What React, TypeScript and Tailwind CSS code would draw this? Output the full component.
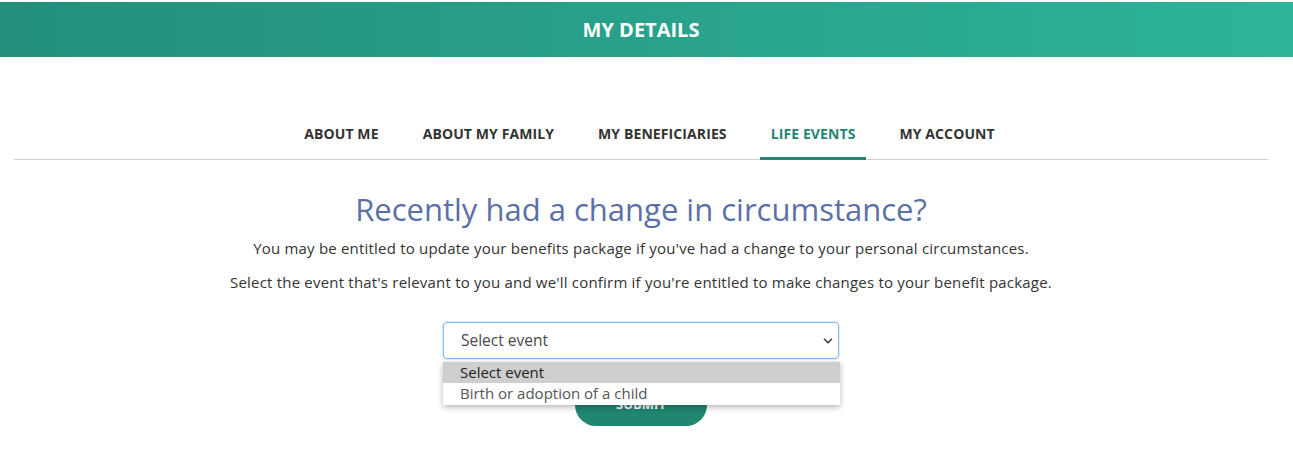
import { ChevronDown } from "lucide-react";

const tabs = ["About me", "About my family", "My beneficiaries", "Life events", "My account"];

function Tabs({ active }: { active: string }) {
  return (
    <nav className="border-b border-[#cfcfcf] pt-[67px]">
      <ul className="flex justify-center gap-[22px] pl-[17px]">
        {tabs.map((t) => {
          const on = t === active;
          return (
            <li
              key={t}
              className={
                on
                  ? "px-[11px] pb-[14px] border-b-[3px] border-[#238775] -mb-px text-[14px] leading-[19px] font-bold uppercase tracking-[0.1px] text-[#238775]"
                  : "px-[11px] pb-[14px] border-b-[3px] border-transparent -mb-px text-[14px] leading-[19px] font-bold uppercase tracking-[0.1px] text-[#333]"
              }
            >
              {t}
            </li>
          );
        })}
      </ul>
    </nav>
  );
}

function EventSelect() {
  return (
    <div className="relative w-[396px] mx-auto text-left">
      <div className="h-[37px] flex items-center justify-between rounded-[4px] border border-[#80bdff] shadow-[0_0_0_1px_rgba(128,189,255,0.25)] bg-white pl-[17px] pr-[3px]">
        <span className="text-[15.5px] text-[#4a4a4a]">Select event</span>
        <ChevronDown size={14} strokeWidth={3} className="text-[#444]" />
      </div>
      <ul className="absolute left-0 right-[-1px] top-[40px] z-10 bg-white shadow-[0_2px_6px_rgba(0,0,0,0.3)] text-[15px] leading-[21px]">
        <li className="bg-[#cecece] pl-[17px] h-[21px] text-[#222]">Select event</li>
        <li className="pl-[17px] h-[22px] text-[#555]">Birth or adoption of a child</li>
      </ul>
    </div>
  );
}

export default function App() {
  return (
    <div className="min-h-[471px] bg-white font-['Open_Sans',sans-serif] text-[#333]">
      <header className="mt-[2px] h-[55px] flex items-center justify-center pr-[11px] bg-gradient-to-r from-[#238f7c] to-[#2eb49b]">
        <h1 className="text-white text-[20px] font-bold">MY DETAILS</h1>
      </header>
      <div className="pl-[14px] pr-[25px]">
        <Tabs active="Life events" />
        <main className="text-center">
          <h2 className="mt-[29px] text-[31px] leading-[40px] text-[#5b70a6]">Recently had a change in circumstance?</h2>
          <p className="mt-[9px] text-[15px] leading-[20px] tracking-[0.2px]">
            You may be entitled to update your benefits package if you've had a change to your personal circumstances.
          </p>
          <p className="mt-[14px] text-[15px] leading-[20px] tracking-[0.2px]">
            Select the event that's relevant to you and we'll confirm if you're entitled to make changes to your benefit package.
          </p>
          <div className="mt-[30px]">
            <EventSelect />
          </div>
          <button className="mt-[25px] w-[132px] h-[42px] rounded-full bg-[#208670] text-white text-[13px] font-bold uppercase">
            Submit
          </button>
        </main>
      </div>
    </div>
  );
}
